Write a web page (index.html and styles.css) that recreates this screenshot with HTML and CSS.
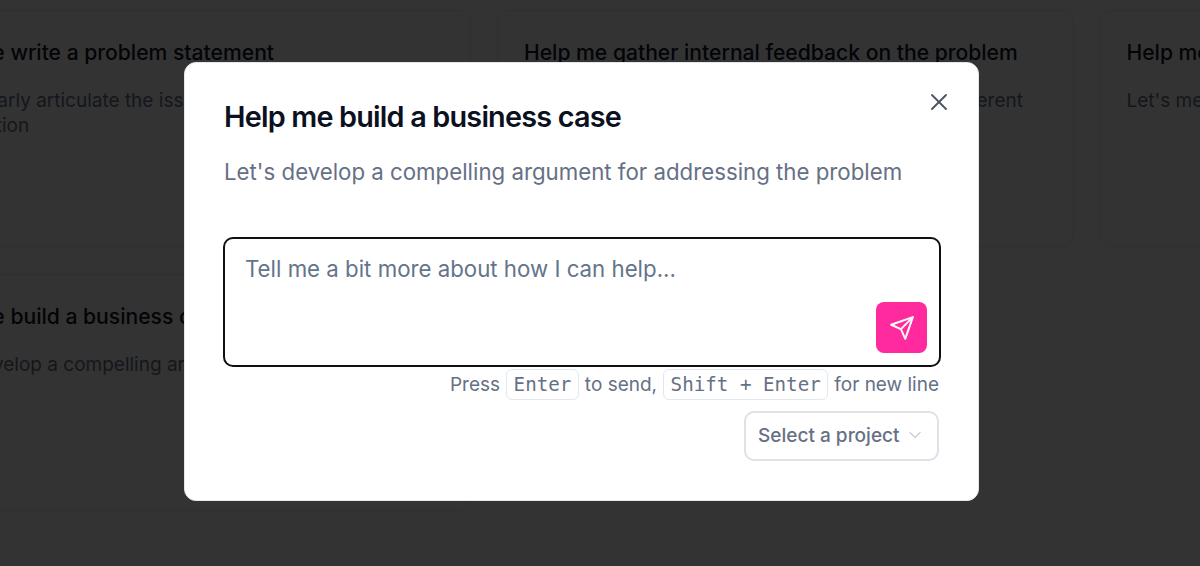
FILE: index.html
```html
<!DOCTYPE html>
<html lang="en">
<head>
  <meta charset="UTF-8" />
  <meta name="viewport" content="width=device-width, initial-scale=1" />
  <title>Help me build a business case</title>
  <link rel="stylesheet" href="styles.css">
</head>
<body>

<div class="card-grid">
  <div class="card">
    <h3>Help me write a problem statement</h3>
    <p>Let's clearly articulate the issue we are facing today and its evolution</p>
  </div>
  <div class="card">
    <h3>Help me gather internal feedback on the problem</h3>
    <p>Let's gather perspectives from stakeholders at different teams</p>
  </div>
  <div class="card">
    <h3>Help me find the right people</h3>
    <p>Let's meet the people who can help</p>
  </div>
  <div class="card">
    <h3>Help me build a business case</h3>
    <p>Let's develop a compelling argument for addressing the problem</p>
  </div>
</div>

<div class="overlay">
  <div class="modal">
    <button class="close-btn" aria-label="Close">
      <svg width="28" height="28" viewBox="0 0 24 24" fill="none" stroke="currentColor" stroke-width="1.6" stroke-linecap="round" stroke-linejoin="round"><path d="M18 6 6 18"/><path d="m6 6 12 12"/></svg>
    </button>
    <h2>Help me build a business case</h2>
    <p class="modal-desc">Let's develop a compelling argument for addressing the problem</p>

    <div class="prompt-box">
      <div class="placeholder">Tell me a bit more about how I can help...</div>
      <button class="send-btn" aria-label="Send">
        <svg width="26" height="26" viewBox="0 0 24 24" fill="none" stroke="currentColor" stroke-width="1.8" stroke-linecap="round" stroke-linejoin="round"><path d="m22 2-7 20-4-9-9-4Z"/><path d="M22 2 11 13"/></svg>
      </button>
    </div>

    <div class="hint">Press <kbd>Enter</kbd> to send, <kbd>Shift + Enter</kbd> for new line</div>

    <div class="project-row">
      <button class="project-select">
        Select a project
        <svg width="20" height="20" viewBox="0 0 24 24" fill="none" stroke="currentColor" stroke-width="1.2" stroke-linecap="round" stroke-linejoin="round"><path d="m6 9 6 6 6-6"/></svg>
      </button>
    </div>
  </div>
</div>

</body>
</html>
```

FILE: styles.css
```css
* {
  box-sizing: border-box;
}
body {
  font-family: Inter, "Liberation Sans", sans-serif;
  background: white;
  margin: 0;
  height: 566px;
  overflow: hidden;
}
.card-grid {
  display: grid;
  grid-template-columns: repeat(3, 576.5px);
  grid-auto-rows: 237px;
  gap: 27px 26px;
  margin: 10px 0 0 -105.5px;
}
.card {
  border: 1px solid #e2e8f0;
  border-radius: 12px;
  padding: 26px;
}
.card h3 {
  margin: 0;
  font-size: 21.12px;
  line-height: 32px;
  font-weight: 500;
  color: #0f172a;
  white-space: nowrap;
}
.card p {
  margin: 19px 0 0;
  font-size: 19px;
  line-height: 25px;
  color: #64748b;
}
.overlay {
  position: fixed;
  inset: 0;
  background: rgba(0,0,0,0.8);
  padding: 62px 0 0 184px;
}
.modal {
  position: relative;
  width: 795px;
  height: 439px;
  background: white;
  border: 1px solid #e2e8f0;
  border-radius: 12px;
  padding: 38px 39px;
}
.modal h2 {
  margin: 0;
  font-size: 28.8px;
  line-height: 32px;
  font-weight: 600;
  letter-spacing: -0.8px;
  color: #0b1120;
}
.modal-desc {
  margin: 23px 0 0;
  font-size: 22.25px;
  line-height: 32px;
  color: #667085;
}
.close-btn {
  position: absolute;
  top: 25px;
  right: 25px;
  padding: 0;
  border: none;
  background: none;
  color: #4b5563;
  display: flex;
}
.prompt-box {
  margin: 49px -2px 0 -1px;
  height: 130px;
  border: 2px solid #0f0f14;
  border-radius: 10px;
  padding: 14px 12px 12px 20px;
  display: flex;
  flex-direction: column;
  justify-content: space-between;
}
.placeholder {
  font-size: 22.25px;
  line-height: 32px;
  color: #64748b;
}
.send-btn {
  align-self: flex-end;
  width: 51px;
  height: 51px;
  border: none;
  border-radius: 8px;
  background: #ff2a9d;
  color: white;
  display: flex;
  align-items: center;
  justify-content: center;
  padding: 0;
}
.hint {
  display: flex;
  justify-content: flex-end;
  align-items: center;
  gap: 6px;
  margin-top: 2px;
  font-size: 19px;
  line-height: 31px;
  color: #667085;
}
kbd {
  font-family: "DejaVu Sans Mono", "Liberation Mono", monospace;
  font-size: 19.2px;
  line-height: 29px;
  height: 31px;
  padding: 0 6.5px;
  border: 1px solid #e2e8f0;
  border-radius: 6px;
  color: #667085;
}
.project-row {
  display: flex;
  justify-content: flex-end;
  margin-top: 11px;
}
.project-select {
  display: flex;
  align-items: center;
  gap: 5px;
  width: 195px;
  height: 50px;
  padding: 0 12px 2px;
  border: 2px solid #dde1e8;
  border-radius: 10px;
  background: white;
  font-family: inherit;
  font-size: 19.05px;
  font-weight: 500;
  white-space: nowrap;
  color: #667085;
}
.project-select svg {
  color: #94a3b8;
}
```
